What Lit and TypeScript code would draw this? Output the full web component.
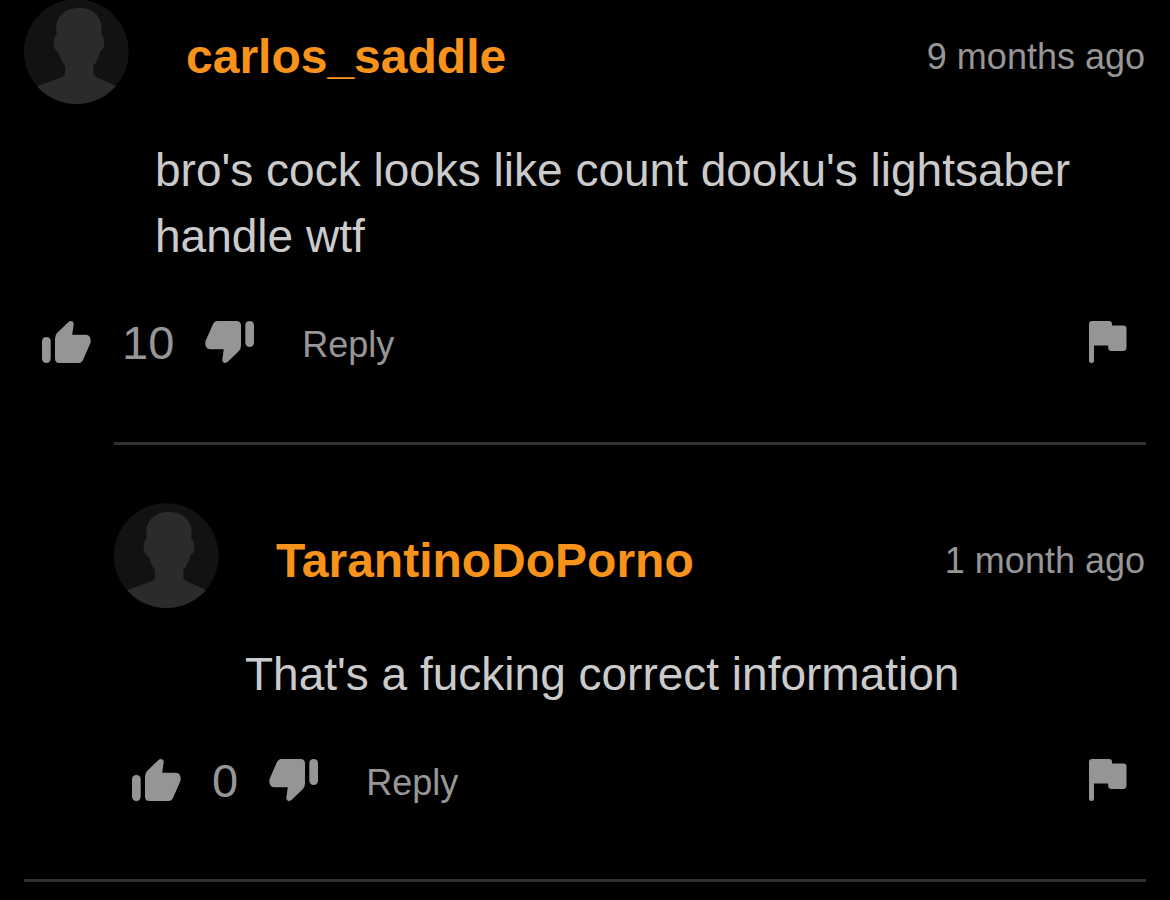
import { LitElement, html, css } from "lit";
import { customElement, property } from "lit/decorators.js";

interface Comment {
  author: string;
  age: string;
  text: string;
  votes: number;
  replies?: Comment[];
}

const comments: Comment[] = [
  {
    author: "carlos_saddle",
    age: "9 months ago",
    text: "bro's cock looks like count dooku's lightsaber handle wtf",
    votes: 10,
    replies: [
      {
        author: "TarantinoDoPorno",
        age: "1 month ago",
        text: "That's a fucking correct information",
        votes: 0,
      },
    ],
  },
];

const thumbShapes = html`<svg class="thumb" viewBox="0 0 49 42" aria-hidden="true">
  <rect x="0" y="16" width="8.7" height="26" rx="4.2" />
  <path d="M13 17.5Q13 14 15.5 11.5L26.5 .9Q28.5 -.6 30.5 .6Q32 1.8 31.6 4L30.2 13.7H43.5Q47 13.7 48.2 17Q49.2 20 48.2 22.5L41.2 38.5Q39.8 42 36.5 42H17.5Q13 42 13 37.5Z" />
</svg>`;

@customElement("comment-item")
class CommentItem extends LitElement {
  @property({ attribute: false }) comment!: Comment;

  static styles = css`
    :host {
      display: block;
    }
    .header {
      display: flex;
      align-items: center;
      gap: 57px;
    }
    .avatar {
      width: 105px;
      height: 105px;
      flex: none;
    }
    .meta {
      flex: 1;
      display: flex;
      align-items: center;
      justify-content: space-between;
      gap: 24px;
      padding: 10px 1px 0 0;
    }
    .author {
      color: #f7931a;
      font-size: 48px;
      line-height: 56px;
      font-weight: bold;
      text-decoration: none;
    }
    .age {
      color: #969696;
      font-size: 36px;
      line-height: 40px;
      white-space: nowrap;
    }
    .text {
      margin: 33px 0 43px 131px;
      color: #cbcbcb;
      font-size: 46px;
      line-height: 66px;
    }
    .actions {
      display: flex;
      align-items: center;
      height: 60px;
      padding: 0 19px 0 18px;
      color: #969696;
    }
    .button {
      display: flex;
      padding: 0;
      border: 0;
      background: none;
      color: inherit;
      font: inherit;
      cursor: pointer;
    }
    .thumb {
      width: 49px;
      height: 42px;
      fill: #969595;
    }
    .down {
      transform: rotate(180deg);
    }
    .votes {
      margin: 0 31px;
      padding-top: 2px;
      font-size: 47px;
      line-height: 58px;
    }
    .reply {
      margin-left: 48px;
      padding-top: 6px;
      font-size: 36px;
      line-height: 40px;
    }
    .flag {
      margin-left: auto;
    }
    .flag-icon {
      width: 38px;
      height: 42px;
      fill: #969595;
    }
    .replies {
      margin: 70px 0 0 90px;
      padding-top: 58px;
      border-top: 3px solid #2f2f2f;
    }
  `;

  render() {
    const c = this.comment;
    return html`
      <article>
        <header class="header">
          <svg class="avatar" viewBox="0 0 315 315" aria-hidden="true">
            <defs><clipPath id="round"><circle cx="157" cy="158" r="157" /></clipPath></defs>
            <g clip-path="url(#round)">
              <rect width="315" height="315" fill="#121212" />
              <path fill="#2b2b2b" d="M165 27C206 27 233 52 233 88L232 108Q240 112 240 126V138Q240 151 229 156C226 174 218 188 208 201V222Q208 229 215 233L276 261V315H41V261L116 233Q123 230 123 222V201Q111 188 105 163Q89 152 89 137V126Q90 112 98 108L97 88C97 52 124 27 165 27Z" />
            </g>
          </svg>
          <div class="meta">
            <a class="author" href="#">${c.author}</a>
            <time class="age">${c.age}</time>
          </div>
        </header>
        <p class="text">${c.text}</p>
        <div class="actions">
          <button class="button" aria-label="Like">${thumbShapes}</button>
          <span class="votes">${c.votes}</span>
          <button class="button down" aria-label="Dislike">${thumbShapes}</button>
          <button class="button reply">Reply</button>
          <button class="button flag" aria-label="Report">
            <svg class="flag-icon" viewBox="0 0 38 42" aria-hidden="true">
              <path d="M3 0H20Q23 0 23 3V4.6H34.5Q37.5 4.6 37.5 7.6V26.5Q37.5 30 34 30H22.5Q19.2 30 19.2 26.5V24.6H5V39.5Q5 42 2.5 42Q0 42 0 39.5V3Q0 0 3 0Z" />
            </svg>
          </button>
        </div>
      </article>
      ${c.replies?.map(
        (r) => html`<div class="replies"><comment-item .comment=${r}></comment-item></div>`
      )}
    `;
  }
}

@customElement("app-root")
class AppRoot extends LitElement {
  static styles = css`
    :host {
      display: block;
      box-sizing: border-box;
      min-height: 100vh;
      padding: 0 24px;
      background: #010001;
      font-family: "Liberation Sans", Arial, sans-serif;
      overflow: hidden;
    }
    .thread {
      margin-top: -1px;
      padding-bottom: 69px;
      border-bottom: 3px solid #2f2f2f;
    }
  `;

  render() {
    return html`<main>
      ${comments.map(
        (c) => html`<section class="thread"><comment-item .comment=${c}></comment-item></section>`
      )}
    </main>`;
  }
}
